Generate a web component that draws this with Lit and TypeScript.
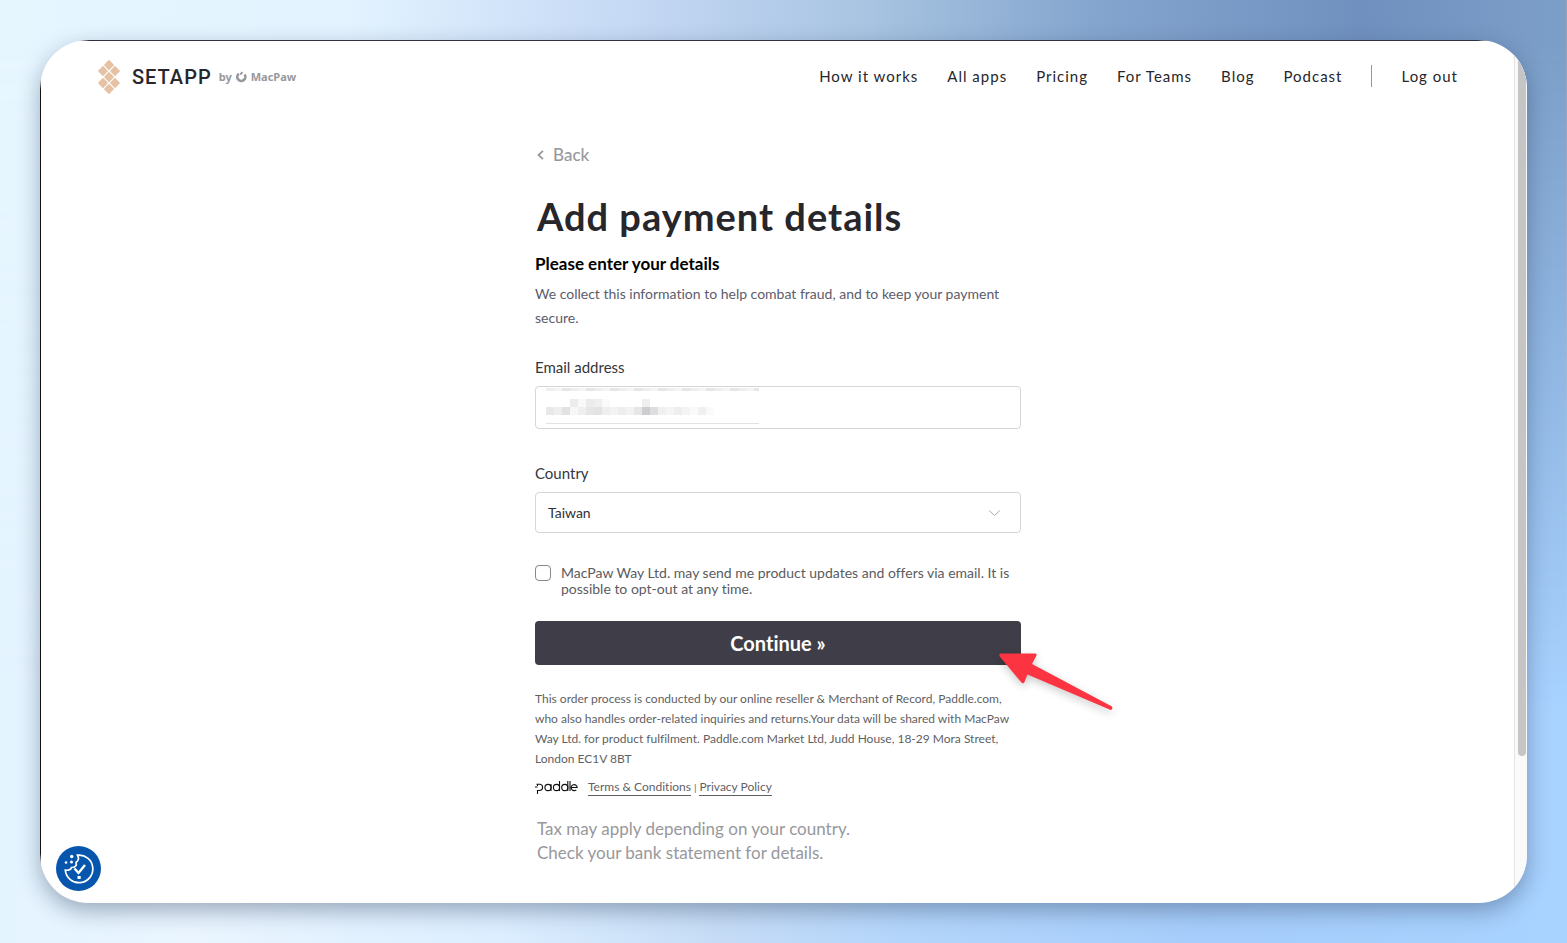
import { LitElement, html, css, svg } from "lit";
import { customElement, state } from "lit/decorators.js";

const NAV = ["How it works", "All apps", "Pricing", "For Teams", "Blog", "Podcast"];

const DIAMONDS = [[11, 5], [5, 11], [17, 11], [11, 17], [5, 23], [17, 23], [11, 29]];

const TOP_ROW = ["#eee", "#f4f4f4", "#e6e6e6"];

// Mosaic blocks over the address: column, row, shade.
const BLOCKS: [number, number, string][] = [
  [3, 0, "#ececec"], [4, 0, "#f9f9f9"], [5, 0, "#ebebeb"], [6, 0, "#efefef"], [7, 0, "#fafafa"], [12, 0, "#efefef"],
  [0, 1, "#e8e8e8"], [1, 1, "#eeeeee"], [2, 1, "#e2e2e2"], [3, 1, "#f7f7f7"], [4, 1, "#efefef"], [5, 1, "#e6e6e6"],
  [6, 1, "#e3e3e3"], [7, 1, "#eeeeee"], [8, 1, "#f3f3f3"], [9, 1, "#ededed"], [10, 1, "#f2f2f2"], [11, 1, "#e6e6e6"],
  [12, 1, "#cdcdcf"], [13, 1, "#dedee0"], [14, 1, "#f0f0f0"], [15, 1, "#f5f5f5"], [16, 1, "#eeeeee"], [17, 1, "#f4f4f4"],
  [18, 1, "#fafafa"], [19, 1, "#f0f0f0"], [20, 1, "#fafafa"],
];

@customElement("app-root")
export class AppRoot extends LitElement {
  @state() private country = "Taiwan";

  static styles = css`
    :host {
      display: block;
      position: relative;
      isolation: isolate;
      box-sizing: border-box;
      min-height: 100vh;
      padding: 40px;
      font-family: Lato, sans-serif;
      font-variant-ligatures: none;
      color: #26262b;
      background: linear-gradient(90deg, #e4f4ff 0%, #eaf5ff 12%, #dceeff 32%, #c6dcf6 46%, #b3d5fb 58%, #a6cdfb 77%, #a8d2ff 100%);
    }
    :host::before {
      content: "";
      position: absolute;
      inset: 0;
      z-index: -1;
      border-right: 1px solid #8fa4bf;
      background: linear-gradient(90deg, #e6f6ff 0%, #e3f3ff 22%, #c6d9f5 40%, #a9c5e2 55%, #84a5ce 70%, #7090bf 87%, #7c9fc8 100%);
      mask-image: linear-gradient(180deg, #000 5%, transparent 75%);
    }
    * { box-sizing: border-box; }
    .window {
      display: flex;
      min-height: calc(100vh - 80px);
      border-radius: 48px;
      overflow: hidden;
      background:
        linear-gradient(90deg, transparent 36px, #2f3040 50px, #2f3040 calc(100% - 50px), transparent calc(100% - 36px)) top / 100% 1px no-repeat,
        linear-gradient(180deg, transparent 36px, #111 50px, #111 calc(100% - 50px), transparent calc(100% - 36px)) left / 1px 100% no-repeat,
        #fff;
      box-shadow: 0 8px 22px rgba(40, 60, 90, 0.4);
    }
    .page { flex: 1; display: flex; flex-direction: column; padding: 1px 0 0 2px; }
    .track { width: 13px; border-left: 1px solid #e4e4e4; background: #fafafa; margin-top: 1px; padding-left: 3px; }
    .thumb { width: 8px; height: 83%; background: #c5c5c5; border-radius: 0 0 4px 4px; }
    .header { display: flex; align-items: center; justify-content: space-between; height: 72px; padding: 0 56px; }
    .brand { display: flex; align-items: center; color: inherit; text-decoration: none; }
    .mark { width: 22px; height: 34px; }
    .name { margin-left: 12px; font: 500 20px/24px Roboto, sans-serif; letter-spacing: 1px; }
    .by { margin-left: 7px; display: flex; align-items: center; gap: 4px; font: 700 11px/16px "Noto Sans", sans-serif; color: #98989c; }
    .nav { display: flex; align-items: center; gap: 29px; }
    .nav a { color: #26262b; text-decoration: none; font-size: 15px; line-height: 22px; letter-spacing: 1px; }
    .nav { padding-bottom: 2px; }
    .rule { width: 1px; height: 22px; background: #98989c; }
    .main { width: 486px; margin: 30px auto 0; }
    .back { display: flex; align-items: center; gap: 9px; width: max-content; padding-left: 2px; color: #98989c; text-decoration: none; font-size: 17px; line-height: 24px; font-weight: 500; }
    h1 { margin: 23px 0 0; padding-left: 2px; font-size: 38px; line-height: 52px; font-weight: 700; letter-spacing: 1px; }
    h2 { margin: 10px 0 0; font-size: 17px; line-height: 24px; font-weight: 700; color: #000; }
    .intro { margin: 6px 0 0; font-size: 14px; line-height: 24px; color: #5c5c6b; }
    .label { display: block; font-size: 15px; line-height: 20px; color: #36363c; }
    .email { margin-top: 27px; }
    .country { margin-top: 34px; }
    .box { position: relative; margin-top: 9px; }
    .box input, .box select {
      display: block; width: 100%; border: 1px solid #d6d6d8; border-radius: 4px; background: #fff;
      font: 14px/20px Lato, sans-serif; color: #303036; padding: 0 12px; appearance: none; outline: none;
    }
    .box input { height: 43px; }
    .box select { height: 41px; }
    .mosaic { position: absolute; left: 11px; top: 2px; pointer-events: none; }
    .chevron { position: absolute; right: 20px; top: 17px; pointer-events: none; }
    .consent { display: flex; gap: 10px; margin-top: 32px; font-size: 14px; line-height: 16px; color: #5b5b60; }
    .consent input { appearance: none; flex: none; width: 16px; height: 16px; margin: 0; border: 1px solid #88888c; border-radius: 4px; background: #fff; }
    .consent input:checked { background: #3f3e48; }
    .action { position: relative; margin-top: 24px; }
    .action button { display: block; width: 100%; height: 44px; border: 0; border-radius: 4px; background: #3f3e48; color: #fff; font: 700 20px/24px Lato, sans-serif; font-variant-ligatures: none; cursor: pointer; }
    .arrow { position: absolute; left: calc(100% - 26px); top: 26px; pointer-events: none; filter: drop-shadow(0 3px 4px rgba(0, 0, 0, 0.22)); }
    .legal { margin: 24px 0 0; font-size: 12px; line-height: 20px; color: #5f5f64; }
    .links { display: flex; align-items: center; margin-top: 9px; font-size: 12px; line-height: 17px; color: #5f5f64; }
    .paddle { width: 43px; margin-right: 10px; }
    .links a { color: inherit; text-decoration: none; border-bottom: 1px solid #5f5f64; }
    .sep { margin: 0 3px; font-size: 10px; }
    .tax { margin: 21px 0 0; padding: 0 0 30px 2px; font-size: 17px; line-height: 24px; color: #98989c; }
    .cookie { position: fixed; left: 56px; bottom: 52px; width: 45px; height: 45px; padding: 0; border: 0; border-radius: 50%; background: #0756ad; cursor: pointer; }
    .cookie svg { display: block; }
  `;

  private logo() {
    return html`<svg class="mark" viewBox="0 0 22 34" fill="#e6c2a5" aria-hidden="true">
      ${DIAMONDS.map(([x, y]) => svg`<rect x=${x - 3.7} y=${y - 3.7} width="7.4" height="7.4" rx="0.8" transform="rotate(45 ${x} ${y})"></rect>`)}
    </svg>`;
  }

  private mosaic() {
    return html`<svg class="mosaic" width="213" height="39" shape-rendering="crispEdges" aria-hidden="true">
      ${Array.from({ length: 27 }, (_, i) => svg`<rect x=${i * 8} y="0" width="8" height="3" fill=${TOP_ROW[i % 3]}></rect>`)}
      ${BLOCKS.map(([c, r, f]) => svg`<rect x=${c * 8} y=${11 + r * 8} width="8" height="8" fill=${f}></rect>`)}
      <rect x="0" y="35" width="213" height="1" fill="#e2e2e4"></rect>
    </svg>`;
  }

  render() {
    return html`
      <div class="window">
        <div class="page">
          <header class="header">
            <a class="brand" href="#">
              ${this.logo()}
              <span class="name">SETAPP</span>
              <span class="by">by
                <svg width="11" height="12" viewBox="0 0 11 12" fill="none" stroke="#98989c" stroke-width="2.6" aria-hidden="true">
                  <path d="M2.8 2.8A4 4 0 1 0 8.6 3.6"></path><path d="M4.3 3.6L6.4 1" stroke-width="1.8"></path>
                </svg>
                MacPaw</span>
            </a>
            <nav class="nav">
              ${NAV.map((n) => html`<a href="#">${n}</a>`)}
              <span class="rule"></span>
              <a href="#">Log out</a>
            </nav>
          </header>
          <main class="main">
            <a class="back" href="#">
              <svg width="7" height="10" viewBox="0 0 7 10" fill="none" stroke="#98989c" stroke-width="1.8" aria-hidden="true"><path d="M6 .8L1.5 5L6 9.2"></path></svg>
              Back</a>
            <h1>Add payment details</h1>
            <h2>Please enter your details</h2>
            <p class="intro">We collect this information to help combat fraud, and to keep your payment secure.</p>
            <form @submit=${(e: Event) => e.preventDefault()}>
              <div class="email">
                <label class="label" for="email">Email address</label>
                <div class="box"><input id="email" type="email" />${this.mosaic()}</div>
              </div>
              <div class="country">
                <label class="label" for="country">Country</label>
                <div class="box">
                  <select id="country" @change=${(e: Event) => (this.country = (e.target as HTMLSelectElement).value)}>
                    <option selected>${this.country}</option>
                  </select>
                  <svg class="chevron" width="13" height="8" viewBox="0 0 13 8" fill="none" stroke="#aaaaae" aria-hidden="true"><path d="M1.2 1.5L6.5 6.5L11.8 1.5"></path></svg>
                </div>
              </div>
              <label class="consent">
                <input type="checkbox" />
                <span>MacPaw Way Ltd. may send me product updates and offers via email. It is possible to opt-out at any time.</span>
              </label>
              <div class="action">
                <button type="submit">Continue »</button>
                <svg class="arrow" width="124" height="70" viewBox="0 0 124 70" fill="#fc3441" aria-hidden="true">
                  <path d="M5.500 6.500L40 6.500Q42.500 6.500 41.200 9L37 17L116.500 59.300Q118 60.500 117 62T114.500 62.500L32.500 27.500L29.500 35Q28.300 37.500 26 35L4.700 9.500Q3.500 7 5.500 6.500Z"></path>
                </svg>
              </div>
            </form>
            <p class="legal">This order process is conducted by our online reseller &amp; Merchant of Record, Paddle.com, who also handles order-related inquiries and returns.Your data will be shared with MacPaw Way Ltd. for product fulfilment. Paddle.com Market Ltd, Judd House, 18-29 Mora Street, London EC1V 8BT</p>
            <div class="links">
              <svg class="paddle" width="43" height="14" viewBox="0 0 43 14" fill="none" stroke="#111" stroke-width="1.1" role="img" aria-label="paddle">
                <path d="M0 7H2.500M2.500 14V10.500H5A3.200 3.200 0 0 0 5 4.200H1.500M2.500 4.200V6"></path>
                <circle cx="13" cy="7.500" r="3.100"></circle><path d="M16 4V11"></path>
                <circle cx="21.500" cy="7.500" r="3.100"></circle><path d="M24.500 1V11"></path>
                <circle cx="29.800" cy="7.500" r="3.100"></circle><path d="M32.800 1V11M35 1V11M36.300 7.500H42.200A3 3 0 1 0 41.300 9.800"></path>
              </svg>
              <a href="#">Terms &amp; Conditions</a><span class="sep">|</span><a href="#">Privacy Policy</a>
            </div>
            <p class="tax">Tax may apply depending on your country.<br />Check your bank statement for details.</p>
          </main>
        </div>
        <div class="track"><div class="thumb"></div></div>
      </div>
      <button class="cookie" aria-label="Cookie settings">
        <svg width="45" height="45" viewBox="0 0 45 45" fill="none" stroke="#fff" stroke-width="1.700" aria-hidden="true">
          <path d="M21.500 9.200A13.800 13.800 0 1 1 9.300 24.200C13 24.500 15 23.500 15.500 21.500C19.500 21.500 21 19 20 16.500C22.500 14.500 23 11.500 21.500 9.200Z"></path>
          <path d="M18.500 22.500L22.500 27L29 19" stroke-width="2.400"></path>
          <g fill="#fff" stroke="none"><rect x="21.500" y="30" width="3.200" height="3"></rect><circle cx="15.700" cy="10.500" r="1.700"></circle><circle cx="10" cy="16.500" r="1.300"></circle><circle cx="15.500" cy="16" r="1.500"></circle></g>
        </svg>
      </button>
    `;
  }
}
